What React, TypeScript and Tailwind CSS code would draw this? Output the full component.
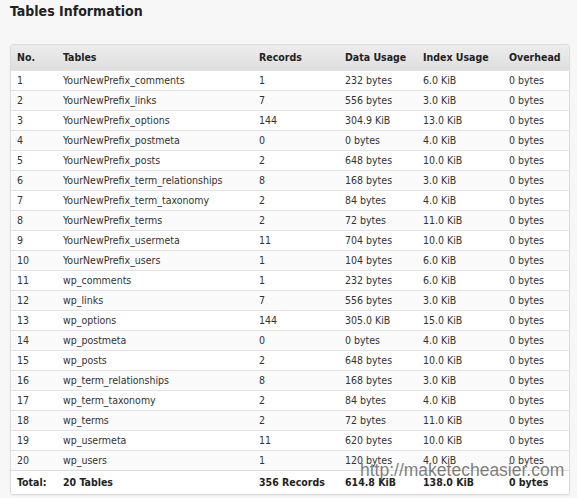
import React from 'react';

type Row = [string, string, string, string, string];

// table name, records, data usage, index usage, overhead
const rows: Row[] = [
  ['YourNewPrefix_comments', '1', '232 bytes', '6.0 KiB', '0 bytes'],
  ['YourNewPrefix_links', '7', '556 bytes', '3.0 KiB', '0 bytes'],
  ['YourNewPrefix_options', '144', '304.9 KiB', '13.0 KiB', '0 bytes'],
  ['YourNewPrefix_postmeta', '0', '0 bytes', '4.0 KiB', '0 bytes'],
  ['YourNewPrefix_posts', '2', '648 bytes', '10.0 KiB', '0 bytes'],
  ['YourNewPrefix_term_relationships', '8', '168 bytes', '3.0 KiB', '0 bytes'],
  ['YourNewPrefix_term_taxonomy', '2', '84 bytes', '4.0 KiB', '0 bytes'],
  ['YourNewPrefix_terms', '2', '72 bytes', '11.0 KiB', '0 bytes'],
  ['YourNewPrefix_usermeta', '11', '704 bytes', '10.0 KiB', '0 bytes'],
  ['YourNewPrefix_users', '1', '104 bytes', '6.0 KiB', '0 bytes'],
  ['wp_comments', '1', '232 bytes', '6.0 KiB', '0 bytes'],
  ['wp_links', '7', '556 bytes', '3.0 KiB', '0 bytes'],
  ['wp_options', '144', '305.0 KiB', '15.0 KiB', '0 bytes'],
  ['wp_postmeta', '0', '0 bytes', '4.0 KiB', '0 bytes'],
  ['wp_posts', '2', '648 bytes', '10.0 KiB', '0 bytes'],
  ['wp_term_relationships', '8', '168 bytes', '3.0 KiB', '0 bytes'],
  ['wp_term_taxonomy', '2', '84 bytes', '4.0 KiB', '0 bytes'],
  ['wp_terms', '2', '72 bytes', '11.0 KiB', '0 bytes'],
  ['wp_usermeta', '11', '620 bytes', '10.0 KiB', '0 bytes'],
  ['wp_users', '1', '120 bytes', '4.0 KiB', '0 bytes'],
];

// fixed column widths so the columns line up with the screenshot
const cols = ['w-[46px]', 'w-[196px]', 'w-[86px]', 'w-[78px]', 'w-[86px]', ''];

export default function App() {
  return (
    <div className="w-[577px] h-[498px] bg-[#f7f7f7] font-['DejaVu_Sans_Condensed','DejaVu_Sans',Verdana,sans-serif] text-[#333] relative overflow-hidden">
      <h2 className="pl-[10px] pt-[1px] text-[14px] font-bold text-[#222] leading-[20px]">Tables Information</h2>

      <div className="mt-[23px] mx-[10px] w-[560px] border border-[#dcdcdc] rounded-[3px] bg-white shadow-[0_1px_2px_rgba(0,0,0,0.06)] overflow-hidden">
        <table className="w-full border-collapse text-[10.5px] leading-[19px] table-fixed">
          <thead>
            <tr className="h-[25px] bg-gradient-to-b from-[#ececec] to-[#dfdfdf] text-[#222]">
              {['No.', 'Tables', 'Records', 'Data Usage', 'Index Usage', 'Overhead'].map((h, i) => (
                <th key={h} className={`${cols[i]} text-left font-bold pl-[6px]`}>{h}</th>
              ))}
            </tr>
          </thead>
          <tbody>
            {rows.map((r, i) => (
              <tr key={r[0]} className={`border-t border-[#e4e4e4] ${i % 2 === 1 ? 'bg-[#fafafa]' : 'bg-white'}`}>
                <td className="pl-[6px] p-0 h-[19px]">{i + 1}</td>
                {r.map((c, j) => (
                  <td key={j} className="pl-[6px] p-0 h-[19px] whitespace-nowrap">{c}</td>
                ))}
              </tr>
            ))}
            <tr className="h-[24px] border-t border-[#dcdcdc] bg-white font-bold text-[#222]">
              <td className="pl-[6px]">Total:</td>
              <td className="pl-[6px]">20 Tables</td>
              <td className="pl-[6px]">356 Records</td>
              <td className="pl-[6px]">614.8 KiB</td>
              <td className="pl-[6px]">138.0 KiB</td>
              <td className="pl-[6px]">0 bytes</td>
            </tr>
          </tbody>
        </table>
      </div>

      {/* site watermark over the table */}
      <div className="absolute left-[360px] top-[460px] text-[17.5px] leading-[20px] text-[#666]/85 font-['Liberation_Sans',Arial,sans-serif] pointer-events-none whitespace-nowrap">
        http://maketecheasier.com
      </div>
    </div>
  );
}
